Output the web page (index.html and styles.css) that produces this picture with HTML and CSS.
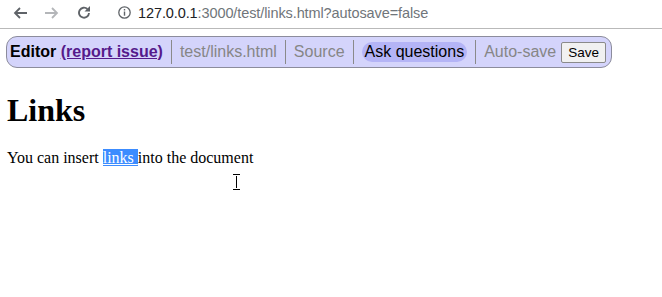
FILE: index.html
```html
<!DOCTYPE html>
<html lang="en">
<head>
    <meta charset="UTF-8">
    <title>links.html</title>
    <link rel="stylesheet" href="styles.css">
</head>
<body>
    <div class="browser-bar">
        <svg class="back" width="14" height="12" viewBox="0 0 14 12"><path d="M14 6H2M7 1L2 6l5 5" fill="none" stroke="#5f6368" stroke-width="1.8"/></svg>
        <svg class="forward" width="14" height="12" viewBox="0 0 14 12"><path d="M0 6h12M7 1l5 5-5 5" fill="none" stroke="#b4b6b9" stroke-width="1.8"/></svg>
        <svg class="reload" width="14" height="13" viewBox="0 0 14 13"><path d="M12 7a5 5 0 1 1-1.6-4" fill="none" stroke="#5f6368" stroke-width="1.9"/><path d="M13 0v5.5H7.5z" fill="#5f6368"/></svg>
        <svg class="info" width="13" height="13" viewBox="0 0 13 13"><circle cx="6.5" cy="6.5" r="5.7" fill="none" stroke="#5f6368" stroke-width="1.3"/><rect x="5.8" y="5.5" width="1.4" height="4.2" fill="#5f6368"/><rect x="5.8" y="3" width="1.4" height="1.5" fill="#5f6368"/></svg>
        <span class="url"><span class="host">127.0.0.1</span>:3000/test/links.html?autosave=false</span>
    </div>

    <div class="page">
        <div class="toolbar">
            <span class="title">Editor <a href="#" class="report">(report issue)</a></span>
            <span class="sep"></span>
            <span class="muted">test/links.html</span>
            <span class="sep"></span>
            <span class="muted">Source</span>
            <span class="sep"></span>
            <span class="pill">Ask questions</span>
            <span class="sep"></span>
            <span class="muted">Auto-save</span>
            <button class="save">Save</button>
        </div>

        <h1>Links</h1>
        <p>You can insert <a href="#" class="sel">links </a>into the document</p>

        <div class="cursor">
            <span class="beam-top"></span>
            <span class="beam"></span>
            <span class="beam-bottom"></span>
        </div>
    </div>
</body>
</html>
```

FILE: styles.css
```css
* {
    box-sizing: border-box;
}

body {
    margin: 0;
    font-family: 'Liberation Serif', serif;
    background: #fff;
}

.browser-bar {
    height: 29px;
    border-bottom: 1px solid #b9b9b9;
    display: flex;
    align-items: center;
    padding: 0 0 3px 13px;
    font-family: Arial, 'Liberation Sans', sans-serif;
}

.browser-bar svg {
    display: block;
    flex-shrink: 0;
}

.forward,
.reload {
    margin-left: 18px;
}

.info {
    margin-left: 27px;
}

.url {
    margin-left: 7px;
    font-size: 14.5px;
    color: #70757a;
    letter-spacing: -0.1px;
    white-space: nowrap;
}

.url .host {
    color: #202124;
}

.page {
    padding: 7px 6px;
}

.toolbar {
    display: flex;
    align-items: center;
    width: 606px;
    height: 32px;
    padding: 0 3px;
    background: #d4d4fb;
    border: 1px solid #8c8c9c;
    border-radius: 11px;
    font-family: 'Liberation Sans', Arial, sans-serif;
    font-size: 16px;
    white-space: nowrap;
}

.toolbar > * {
    flex-shrink: 0;
}

.title {
    font-weight: bold;
    color: #000;
}

.report {
    color: #551a8b;
}

.sep {
    width: 1px;
    height: 24px;
    background: #8a8a8a;
    margin: 0 8px;
}

.muted {
    color: #868686;
}

.pill {
    color: #000;
    background: #b4b4f6;
    border-radius: 10px;
    padding: 1px 3px;
}

.muted + .save {
    margin-left: 5px;
}

.save {
    font-family: 'Liberation Sans', Arial, sans-serif;
    font-size: 13.5px;
    padding: 2px 6px;
    background: #f1f1f1;
    border: 1px solid #8a8a8a;
    border-radius: 2px;
}

h1 {
    font-size: 32px;
    margin: 24px 0 20px 1px;
}

p {
    font-size: 16px;
    margin: 0 0 0 1px;
}

.sel {
    color: #fff;
    background: #3c8cff;
}

.cursor {
    display: flex;
    flex-direction: column;
    align-items: center;
    width: 7px;
    margin: 7px 0 0 227px;
}

.beam-top,
.beam-bottom {
    width: 7px;
    height: 2px;
    border-top: 1px solid #000;
}

.beam-bottom {
    border-top: none;
    border-bottom: 1px solid #000;
}

.beam {
    width: 1px;
    height: 12px;
    background: #000;
}
```
